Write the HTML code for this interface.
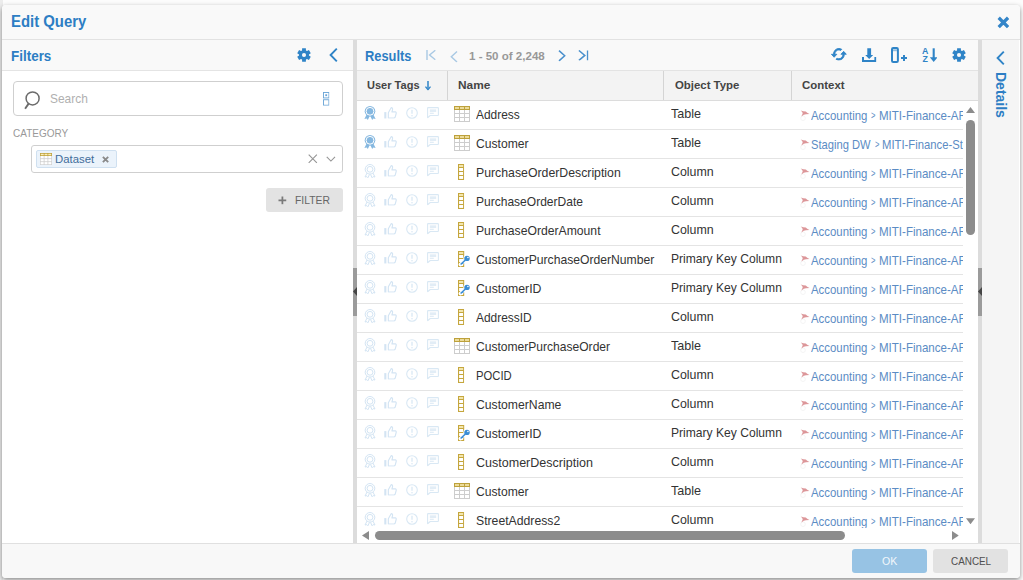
<!DOCTYPE html>
<html lang="en"><head><meta charset="utf-8"><title>Edit Query</title>
<style>

html,body{margin:0;padding:0}
body{width:1023px;height:580px;overflow:hidden;position:relative;background:#fcfcfc;font-family:"Liberation Sans", sans-serif;}
.abs,.t,.i{position:absolute}
.t{white-space:pre;line-height:20px;transform-origin:0 50%;display:block}
.i{overflow:visible;display:block}
#bgstrip{left:0;top:0;width:3px;height:580px;background:#ececec}
#dlg{left:2px;top:5px;width:1018px;height:573px;background:#fff;border-radius:4px;box-shadow:0 2px 5px rgba(0,0,0,.45);overflow:hidden}
#hdr{left:0;top:0;width:1018px;height:34px;background:#f9f9f9;border-bottom:1px solid #e2e2e2}
#fhdr{left:0;top:35px;width:351px;height:30px;background:#f9f9f9;border-bottom:1px solid #e4e4e4}
#rhdr{left:355px;top:35px;width:621px;height:30px;background:#f9f9f9}
#split1{left:351px;top:35px;width:4px;height:503px;background:#dcdcdc}
#split2{left:976px;top:35px;width:4px;height:503px;background:#dcdcdc}
#det{left:980px;top:35px;width:37px;height:503px;background:#f5f5f5}
#ftr{left:0;top:538px;width:1018px;height:35px;background:#f8f8f8;border-top:1px solid #e0e0e0;box-sizing:border-box}
#search{left:11px;top:76px;width:330px;height:35px;border:1px solid #cfcfcf;border-radius:4px;box-sizing:border-box;background:#fff}
#sel{left:29px;top:140px;width:312px;height:28px;border:1px solid #cfcfcf;border-radius:3px;box-sizing:border-box;background:#fff}
#tag{left:34px;top:145px;width:81px;height:18px;border:1px solid #cfe0f0;border-radius:2px;box-sizing:border-box;background:#ebf3fb}
#fbtn{left:264px;top:183px;width:77px;height:24px;border-radius:3px;background:#e3e3e3}
#okb{left:850px;top:544px;width:75px;height:24px;border-radius:3px;background:#97c3e4}
#cab{left:931px;top:544px;width:75px;height:24px;border-radius:3px;background:#e2e2e2}
#ghead{left:355px;top:65px;width:621px;height:31px;background:#f3f3f3;border-top:1px solid #e3e3e3;border-bottom:1px solid #dcdcdc;box-sizing:border-box}
.cd{position:absolute;top:66px;width:1px;height:29px;background:#d4d4d4}
#gbody{left:355px;top:95px;width:606px;height:431px;overflow:hidden;background:#fff}
.rl{position:absolute;left:0;width:606px;height:1px;background:#e4e4e4}
.sb{position:absolute;background:#8c8c8c;border-radius:5px}

</style></head><body>
<div class="abs" id="bgstrip"></div>
<div class="abs" id="dlg">
<div class="abs" id="hdr"></div><div class="abs" id="fhdr"></div><div class="abs" id="rhdr"></div>
<div class="abs" id="split1"></div><div class="abs" id="split2"></div><div class="abs" id="det"></div><div class="abs" id="ftr"></div>
<div class="abs" id="search"></div><div class="abs" id="sel"></div><div class="abs" id="tag"></div>
<div class="abs" id="fbtn"></div><div class="abs" id="okb"></div><div class="abs" id="cab"></div>
<div class="abs" id="ghead"></div>
<div class="cd" style="left:445.0px"></div>
<div class="cd" style="left:661.3px"></div>
<div class="cd" style="left:788.9px"></div>
</div>
<svg width="0" height="0" style="position:absolute;left:0;top:0"><defs>
<symbol id="gear" viewBox="0 0 14 14"><path fill="currentColor" fill-rule="evenodd" d="M5.05 2.39 L5.13 0.25 L8.87 0.25 L8.95 2.39 L10.01 3.01 L11.91 2.01 L13.78 5.24 L11.96 6.38 L11.96 7.62 L13.78 8.76 L11.91 11.99 L10.01 10.99 L8.95 11.61 L8.87 13.75 L5.13 13.75 L5.05 11.61 L3.99 10.99 L2.09 11.99 L0.22 8.76 L2.04 7.62 L2.04 6.38 L0.22 5.24 L2.09 2.01 L3.99 3.01Z M4.95 7a2.05 2.05 0 1 0 4.1 0a2.05 2.05 0 1 0 -4.1 0Z"/></symbol>
<symbol id="chev-l" viewBox="0 0 9 14"><path d="M7.8 0.7 L1.6 7 L7.8 13.3" fill="none" stroke="currentColor" stroke-width="1.9" stroke-linecap="butt" stroke-linejoin="miter"/></symbol>
<symbol id="close" viewBox="0 0 12 12"><path d="M1.6 1.6 L10.4 10.4 M10.4 1.6 L1.6 10.4" fill="none" stroke="currentColor" stroke-width="3.1"/></symbol>
<symbol id="mag" viewBox="0 0 17 19"><circle cx="8.6" cy="7.4" r="6.5" fill="none" stroke="currentColor" stroke-width="1.5"/><path d="M4.6 12.6 L1.1 17.8" stroke="currentColor" stroke-width="1.9" stroke-linecap="butt"/></symbol>
<symbol id="opts" viewBox="0 0 7 15"><rect x="0.5" y="0.5" width="6" height="6" fill="none" stroke="currentColor" stroke-width="1"/><rect x="2.5" y="2.5" width="2" height="2" fill="currentColor"/><rect x="0.5" y="8.5" width="6" height="6" fill="none" stroke="currentColor" stroke-width="1"/></symbol>
<symbol id="x-bold" viewBox="0 0 8 8"><path d="M1 1 L7 7 M7 1 L1 7" stroke="currentColor" stroke-width="2.1" fill="none"/></symbol>
<symbol id="x-thin" viewBox="0 0 11 11"><path d="M0.8 0.8 L10.2 10.2 M10.2 0.8 L0.8 10.2" stroke="currentColor" stroke-width="1.3" fill="none"/></symbol>
<symbol id="chev-d" viewBox="0 0 11 7"><path d="M0.8 1 L5.5 5.7 L10.2 1" stroke="currentColor" stroke-width="1.3" fill="none"/></symbol>
<symbol id="plus" viewBox="0 0 9 9"><path d="M4.5 0.5 V8.5 M0.5 4.5 H8.5" stroke="currentColor" stroke-width="1.8" fill="none"/></symbol>
<symbol id="first" viewBox="0 0 10 10"><path d="M1 0 V10" stroke="currentColor" stroke-width="1.4" fill="none"/><path d="M9.3 0.3 L3.6 5 L9.3 9.7" stroke="currentColor" stroke-width="1.4" fill="none"/></symbol>
<symbol id="last" viewBox="0 0 10.5 10.5"><path d="M9.6 0.5 V10.5" stroke="currentColor" stroke-width="1.5" fill="none"/><path d="M0.9 0.5 L6.8 5.4 L0.9 10.3" stroke="currentColor" stroke-width="1.5" fill="none"/></symbol>
<symbol id="prev" viewBox="0 0 8 11.5"><path d="M7 0.6 L1.3 5.75 L7 10.9" stroke="currentColor" stroke-width="1.4" fill="none"/></symbol>
<symbol id="next" viewBox="0 0 8 11.5"><path d="M1 0.6 L6.7 5.75 L1 10.9" stroke="currentColor" stroke-width="1.5" fill="none"/></symbol>
<symbol id="refresh" viewBox="0.4 3.4 23.2 17.2" preserveAspectRatio="none"><path fill="currentColor" stroke="currentColor" stroke-width="1.2" stroke-linejoin="round" d="M19 8l-4 4h3c0 3.31-2.69 6-6 6-1.01 0-1.97-.25-2.8-.7l-1.46 1.46C8.97 19.54 10.43 20 12 20c4.42 0 8-3.58 8-8h3l-4-4zM6 12c0-3.31 2.69-6 6-6 1.01 0 1.97.25 2.8.7l1.46-1.46C15.03 4.46 13.57 4 12 4c-4.42 0-8 3.58-8 8H1l4 4 4-4H6z"/></symbol>
<symbol id="download" viewBox="0 0 14.4 14"><path d="M5.3 0.2 H9.1 V7 H11.2 L7.2 11 L3.2 7 H5.3Z" fill="currentColor"/><path d="M1 9 V13 H13.4 V9" fill="none" stroke="currentColor" stroke-width="2"/></symbol>
<symbol id="coladd" viewBox="0 0 16 16"><rect x="1" y="1" width="5.9" height="14" rx="1.2" fill="none" stroke="currentColor" stroke-width="2"/><rect x="2" y="2.3" width="3.9" height="1.9" fill="currentColor" opacity=".5"/><path d="M13 7.9 V13.9 M10 10.9 H16" stroke="currentColor" stroke-width="2"/></symbol>
<symbol id="sortaz" viewBox="0 0 15 14"><text x="0" y="6.4" font-family="Liberation Sans, sans-serif" font-size="8.8" font-weight="bold" fill="currentColor">A</text><text x="0.5" y="14" font-family="Liberation Sans, sans-serif" font-size="8.8" font-weight="bold" fill="currentColor">Z</text><path d="M11.7 0.3 V10.4" stroke="currentColor" stroke-width="2.1" fill="none"/><path d="M7.8 9.2 H15.6 L11.7 14Z" fill="currentColor"/></symbol>
<symbol id="sortdown" viewBox="0 0 6 10"><path d="M3 0 V8" stroke="currentColor" stroke-width="1.6" fill="none"/><path d="M0.3 6 L3 9.3 L5.7 6" stroke="currentColor" stroke-width="1.4" fill="none"/></symbol>
<symbol id="tri-u" viewBox="0 0 9 6"><path d="M0 6 L4.5 0 L9 6Z" fill="currentColor"/></symbol>
<symbol id="tri-d" viewBox="0 0 9 6"><path d="M0 0 L4.5 6 L9 0Z" fill="currentColor"/></symbol>
<symbol id="tri-l" viewBox="0 0 7 9" preserveAspectRatio="none"><path d="M7 0 L0 4.5 L7 9Z" fill="currentColor"/></symbol>
<symbol id="tri-r" viewBox="0 0 7 9" preserveAspectRatio="none"><path d="M0 0 L7 4.5 L0 9Z" fill="currentColor"/></symbol>
<symbol id="tbl" viewBox="0 0 16 16"><rect x="0" y="3" width="16" height="13" fill="#fff"/><path d="M0.5 4 V16 M5.5 4 V16 M10.5 4 V16 M15.5 4 V16 M0 7.5 H16 M0 11.5 H16 M0 15.5 H16" stroke="#cdcdcd" stroke-width="1" fill="none"/><rect x="0" y="0" width="16" height="4" fill="#bda13b"/><path d="M1 2 H5 M6 2 H10 M11 2 H15" stroke="#fbeebb" stroke-width="1.7"/></symbol>
<symbol id="col" viewBox="0 0 6.2 16"><rect x="0.55" y="0.5" width="5.1" height="15" fill="#fff" stroke="#c5a63c" stroke-width="1.1"/><rect x="1.1" y="1" width="4" height="2" fill="#f3e6ad"/><path d="M0.55 3.5 H5.65 M0.55 7.5 H5.65 M0.55 11.5 H5.65" stroke="#c5a63c" stroke-width="1"/></symbol>
<symbol id="key" viewBox="0 0 13 16"><rect x="0.55" y="0.5" width="5.1" height="15" fill="#fff" stroke="#c5a63c" stroke-width="1.1"/><rect x="1.1" y="1" width="4" height="2" fill="#f3e6ad"/><path d="M0.55 3.5 H5.65 M0.55 7.5 H5.65 M0.55 11.5 H5.65" stroke="#c5a63c" stroke-width="1"/><path d="M9 7.4 L2.4 13.6" stroke="#fff" stroke-width="3.6" stroke-linecap="round"/><circle cx="9" cy="7.4" r="3.6" fill="#fff"/><circle cx="9" cy="7.4" r="2.7" fill="#3a8dd4"/><circle cx="9.9" cy="6.5" r="0.8" fill="#fff"/><path d="M7.4 9 L2.6 13.5" stroke="#3a8dd4" stroke-width="1.6"/><path d="M4.3 11.6 L5.3 12.7" stroke="#3a8dd4" stroke-width="1.3"/></symbol>
<symbol id="ctx" viewBox="0 0 10 11"><circle cx="3" cy="8.2" r="2.3" fill="none" stroke="#f3f3f3" stroke-width="0.9"/><path d="M0.7 0.5 L3.2 1.3 L5.8 1.6 L7.2 2.7 L9.4 3.9 L6 4.3 L3.8 4.8 L1.3 6.4 L2.7 3.6 L2.2 1.9 Z" fill="#cc6468" opacity=".68"/></symbol>
<symbol id="award-on" viewBox="0 0 12 14"><path d="M3 7.8 L0.4 12.9 L2.7 12.5 L3.8 14 L6 9.6 L8.2 14 L9.3 12.5 L11.6 12.9 L9 7.8Z" fill="currentColor"/><circle cx="6" cy="5.3" r="5.3" fill="currentColor"/><circle cx="6" cy="5.3" r="3.9" fill="none" stroke="#fff" stroke-width="1"/></symbol>
<symbol id="award" viewBox="0 0 12 14"><path d="M3.1 9 L1 13 L2.9 12.6 L3.9 13.8 L5.5 10.4 M8.9 9 L11 13 L9.1 12.6 L8.1 13.8 L6.5 10.4" fill="none" stroke="currentColor" stroke-width="1"/><circle cx="6" cy="5.3" r="4.8" fill="none" stroke="currentColor" stroke-width="1"/><circle cx="6" cy="5.3" r="2.9" fill="none" stroke="currentColor" stroke-width="1"/></symbol>
<symbol id="thumb" viewBox="0 0 14 12.5"><rect x="0.3" y="5.4" width="2.2" height="6.9" fill="currentColor"/><path d="M4.6 11.7 V6.2 L7.6 0.7 Q9.6 0.8 9 3.2 L8.4 5.2 H12.2 Q13.2 5.4 13 6.6 L11.8 10.9 Q11.5 11.7 10.6 11.7Z" fill="none" stroke="currentColor" stroke-width="1.2" stroke-linejoin="round"/></symbol>
<symbol id="alert" viewBox="0 0 12 12"><circle cx="6" cy="6" r="5.3" fill="none" stroke="currentColor" stroke-width="1.1"/><path d="M6 2.8 V6.8" stroke="currentColor" stroke-width="1.3"/><circle cx="6" cy="8.8" r="0.8" fill="currentColor"/></symbol>
<symbol id="comment" viewBox="0 0 12 11.4"><path d="M1.2 0.6 H10.8 Q11.4 0.6 11.4 1.2 V7.9 Q11.4 8.5 10.8 8.5 H3.2 L0.6 10.8 V1.2 Q0.6 0.6 1.2 0.6Z" fill="none" stroke="currentColor" stroke-width="1.1" stroke-linejoin="round"/><path d="M2.8 3 H9.2 M2.8 4.3 H9.2 M2.8 6.2 H6.8" stroke="currentColor" stroke-width="1.1"/></symbol>
</defs></svg>
<div class="abs" id="gb2" style="left:357px;top:100px;width:606px;height:428px;overflow:hidden">
<div class="rl" style="top:29px"></div>
<div class="rl" style="top:58px"></div>
<div class="rl" style="top:87px"></div>
<div class="rl" style="top:116px"></div>
<div class="rl" style="top:145px"></div>
<div class="rl" style="top:174px"></div>
<div class="rl" style="top:203px"></div>
<div class="rl" style="top:232px"></div>
<div class="rl" style="top:261px"></div>
<div class="rl" style="top:290px"></div>
<div class="rl" style="top:319px"></div>
<div class="rl" style="top:348px"></div>
<div class="rl" style="top:377px"></div>
<div class="rl" style="top:406px"></div>
<div class="rl" style="top:435px"></div>
<span class="t" style="left:119.23px;top:4.60px;font-size:12.7px;color:#333333;transform:scaleX(0.9389);">Address</span>
<span class="t" style="left:313.97px;top:3.60px;font-size:12.7px;color:#333333;transform:scaleX(0.9917);">Table</span>
<span class="t" style="left:454.38px;top:5.80px;font-size:12.7px;color:#5b8cc4;transform:scaleX(0.8977);">Accounting</span>
<span class="t" style="left:514.23px;top:5.46px;font-size:10.5px;color:#5b8cc4;transform:scaleX(0.7241);">&gt;</span>
<span class="t" style="left:521.85px;top:5.80px;font-size:12.7px;color:#5b8cc4;transform:scaleX(0.9088);">MITI-Finance-AR</span>
<span class="t" style="left:118.63px;top:33.60px;font-size:12.7px;color:#333333;transform:scaleX(0.9558);">Customer</span>
<span class="t" style="left:313.97px;top:32.60px;font-size:12.7px;color:#333333;transform:scaleX(0.9917);">Table</span>
<span class="t" style="left:453.89px;top:34.80px;font-size:12.7px;color:#5b8cc4;transform:scaleX(0.8795);">Staging DW</span>
<span class="t" style="left:517.63px;top:34.46px;font-size:10.5px;color:#5b8cc4;transform:scaleX(0.7241);">&gt;</span>
<span class="t" style="left:525.27px;top:34.80px;font-size:12.7px;color:#5b8cc4;transform:scaleX(0.8885);">MITI-Finance-St</span>
<span class="t" style="left:119.04px;top:62.60px;font-size:12.7px;color:#333333;transform:scaleX(0.9683);">PurchaseOrderDescription</span>
<span class="t" style="left:313.62px;top:61.60px;font-size:12.7px;color:#333333;transform:scaleX(0.9775);">Column</span>
<span class="t" style="left:454.38px;top:63.80px;font-size:12.7px;color:#5b8cc4;transform:scaleX(0.8977);">Accounting</span>
<span class="t" style="left:514.23px;top:63.46px;font-size:10.5px;color:#5b8cc4;transform:scaleX(0.7241);">&gt;</span>
<span class="t" style="left:521.85px;top:63.80px;font-size:12.7px;color:#5b8cc4;transform:scaleX(0.9088);">MITI-Finance-AR</span>
<span class="t" style="left:119.06px;top:91.60px;font-size:12.7px;color:#333333;transform:scaleX(0.9480);">PurchaseOrderDate</span>
<span class="t" style="left:313.62px;top:90.60px;font-size:12.7px;color:#333333;transform:scaleX(0.9775);">Column</span>
<span class="t" style="left:454.38px;top:92.80px;font-size:12.7px;color:#5b8cc4;transform:scaleX(0.8977);">Accounting</span>
<span class="t" style="left:514.23px;top:92.46px;font-size:10.5px;color:#5b8cc4;transform:scaleX(0.7241);">&gt;</span>
<span class="t" style="left:521.85px;top:92.80px;font-size:12.7px;color:#5b8cc4;transform:scaleX(0.9088);">MITI-Finance-AR</span>
<span class="t" style="left:119.05px;top:120.60px;font-size:12.7px;color:#333333;transform:scaleX(0.9597);">PurchaseOrderAmount</span>
<span class="t" style="left:313.62px;top:119.60px;font-size:12.7px;color:#333333;transform:scaleX(0.9775);">Column</span>
<span class="t" style="left:454.38px;top:121.80px;font-size:12.7px;color:#5b8cc4;transform:scaleX(0.8977);">Accounting</span>
<span class="t" style="left:514.23px;top:121.46px;font-size:10.5px;color:#5b8cc4;transform:scaleX(0.7241);">&gt;</span>
<span class="t" style="left:521.85px;top:121.80px;font-size:12.7px;color:#5b8cc4;transform:scaleX(0.9088);">MITI-Finance-AR</span>
<span class="t" style="left:118.63px;top:149.60px;font-size:12.7px;color:#333333;transform:scaleX(0.9579);">CustomerPurchaseOrderNumber</span>
<span class="t" style="left:314.16px;top:148.60px;font-size:12.7px;color:#333333;transform:scaleX(0.9530);">Primary Key Column</span>
<span class="t" style="left:454.38px;top:150.80px;font-size:12.7px;color:#5b8cc4;transform:scaleX(0.8977);">Accounting</span>
<span class="t" style="left:514.23px;top:150.46px;font-size:10.5px;color:#5b8cc4;transform:scaleX(0.7241);">&gt;</span>
<span class="t" style="left:521.85px;top:150.80px;font-size:12.7px;color:#5b8cc4;transform:scaleX(0.9088);">MITI-Finance-AR</span>
<span class="t" style="left:118.63px;top:178.60px;font-size:12.7px;color:#333333;transform:scaleX(0.9671);">CustomerID</span>
<span class="t" style="left:314.16px;top:177.60px;font-size:12.7px;color:#333333;transform:scaleX(0.9530);">Primary Key Column</span>
<span class="t" style="left:454.38px;top:179.80px;font-size:12.7px;color:#5b8cc4;transform:scaleX(0.8977);">Accounting</span>
<span class="t" style="left:514.23px;top:179.46px;font-size:10.5px;color:#5b8cc4;transform:scaleX(0.7241);">&gt;</span>
<span class="t" style="left:521.85px;top:179.80px;font-size:12.7px;color:#5b8cc4;transform:scaleX(0.9088);">MITI-Finance-AR</span>
<span class="t" style="left:119.23px;top:207.60px;font-size:12.7px;color:#333333;transform:scaleX(0.9385);">AddressID</span>
<span class="t" style="left:313.62px;top:206.60px;font-size:12.7px;color:#333333;transform:scaleX(0.9775);">Column</span>
<span class="t" style="left:454.38px;top:208.80px;font-size:12.7px;color:#5b8cc4;transform:scaleX(0.8977);">Accounting</span>
<span class="t" style="left:514.23px;top:208.46px;font-size:10.5px;color:#5b8cc4;transform:scaleX(0.7241);">&gt;</span>
<span class="t" style="left:521.85px;top:208.80px;font-size:12.7px;color:#5b8cc4;transform:scaleX(0.9088);">MITI-Finance-AR</span>
<span class="t" style="left:118.64px;top:236.60px;font-size:12.7px;color:#333333;transform:scaleX(0.9506);">CustomerPurchaseOrder</span>
<span class="t" style="left:313.97px;top:235.60px;font-size:12.7px;color:#333333;transform:scaleX(0.9917);">Table</span>
<span class="t" style="left:454.38px;top:237.80px;font-size:12.7px;color:#5b8cc4;transform:scaleX(0.8977);">Accounting</span>
<span class="t" style="left:514.23px;top:237.46px;font-size:10.5px;color:#5b8cc4;transform:scaleX(0.7241);">&gt;</span>
<span class="t" style="left:521.85px;top:237.80px;font-size:12.7px;color:#5b8cc4;transform:scaleX(0.9088);">MITI-Finance-AR</span>
<span class="t" style="left:119.13px;top:265.60px;font-size:12.7px;color:#333333;transform:scaleX(0.8874);">POCID</span>
<span class="t" style="left:313.62px;top:264.60px;font-size:12.7px;color:#333333;transform:scaleX(0.9775);">Column</span>
<span class="t" style="left:454.38px;top:266.80px;font-size:12.7px;color:#5b8cc4;transform:scaleX(0.8977);">Accounting</span>
<span class="t" style="left:514.23px;top:266.46px;font-size:10.5px;color:#5b8cc4;transform:scaleX(0.7241);">&gt;</span>
<span class="t" style="left:521.85px;top:266.80px;font-size:12.7px;color:#5b8cc4;transform:scaleX(0.9088);">MITI-Finance-AR</span>
<span class="t" style="left:118.63px;top:294.60px;font-size:12.7px;color:#333333;transform:scaleX(0.9614);">CustomerName</span>
<span class="t" style="left:313.62px;top:293.60px;font-size:12.7px;color:#333333;transform:scaleX(0.9775);">Column</span>
<span class="t" style="left:454.38px;top:295.80px;font-size:12.7px;color:#5b8cc4;transform:scaleX(0.8977);">Accounting</span>
<span class="t" style="left:514.23px;top:295.46px;font-size:10.5px;color:#5b8cc4;transform:scaleX(0.7241);">&gt;</span>
<span class="t" style="left:521.85px;top:295.80px;font-size:12.7px;color:#5b8cc4;transform:scaleX(0.9088);">MITI-Finance-AR</span>
<span class="t" style="left:118.63px;top:323.60px;font-size:12.7px;color:#333333;transform:scaleX(0.9671);">CustomerID</span>
<span class="t" style="left:314.16px;top:322.60px;font-size:12.7px;color:#333333;transform:scaleX(0.9530);">Primary Key Column</span>
<span class="t" style="left:454.38px;top:324.80px;font-size:12.7px;color:#5b8cc4;transform:scaleX(0.8977);">Accounting</span>
<span class="t" style="left:514.23px;top:324.46px;font-size:10.5px;color:#5b8cc4;transform:scaleX(0.7241);">&gt;</span>
<span class="t" style="left:521.85px;top:324.80px;font-size:12.7px;color:#5b8cc4;transform:scaleX(0.9088);">MITI-Finance-AR</span>
<span class="t" style="left:118.61px;top:352.60px;font-size:12.7px;color:#333333;transform:scaleX(0.9872);">CustomerDescription</span>
<span class="t" style="left:313.62px;top:351.60px;font-size:12.7px;color:#333333;transform:scaleX(0.9775);">Column</span>
<span class="t" style="left:454.38px;top:353.80px;font-size:12.7px;color:#5b8cc4;transform:scaleX(0.8977);">Accounting</span>
<span class="t" style="left:514.23px;top:353.46px;font-size:10.5px;color:#5b8cc4;transform:scaleX(0.7241);">&gt;</span>
<span class="t" style="left:521.85px;top:353.80px;font-size:12.7px;color:#5b8cc4;transform:scaleX(0.9088);">MITI-Finance-AR</span>
<span class="t" style="left:118.63px;top:381.60px;font-size:12.7px;color:#333333;transform:scaleX(0.9558);">Customer</span>
<span class="t" style="left:313.97px;top:380.60px;font-size:12.7px;color:#333333;transform:scaleX(0.9917);">Table</span>
<span class="t" style="left:454.38px;top:382.80px;font-size:12.7px;color:#5b8cc4;transform:scaleX(0.8977);">Accounting</span>
<span class="t" style="left:514.23px;top:382.46px;font-size:10.5px;color:#5b8cc4;transform:scaleX(0.7241);">&gt;</span>
<span class="t" style="left:521.85px;top:382.80px;font-size:12.7px;color:#5b8cc4;transform:scaleX(0.9088);">MITI-Finance-AR</span>
<span class="t" style="left:118.69px;top:410.60px;font-size:12.7px;color:#333333;transform:scaleX(0.9625);">StreetAddress2</span>
<span class="t" style="left:313.62px;top:409.60px;font-size:12.7px;color:#333333;transform:scaleX(0.9775);">Column</span>
<span class="t" style="left:454.38px;top:411.80px;font-size:12.7px;color:#5b8cc4;transform:scaleX(0.8977);">Accounting</span>
<span class="t" style="left:514.23px;top:411.46px;font-size:10.5px;color:#5b8cc4;transform:scaleX(0.7241);">&gt;</span>
<span class="t" style="left:521.85px;top:411.80px;font-size:12.7px;color:#5b8cc4;transform:scaleX(0.9088);">MITI-Finance-AR</span>
<svg class="i" style="left:7px;top:6px;width:12px;height:14px;color:#86b8e0;"><use href="#award-on"/></svg>
<svg class="i" style="left:27.19999999999999px;top:6.9px;width:13.2px;height:11.8px;color:#d3e4f3;"><use href="#thumb"/></svg>
<svg class="i" style="left:49px;top:7px;width:12px;height:12px;color:#d9e8f4;"><use href="#alert"/></svg>
<svg class="i" style="left:70px;top:7px;width:12px;height:11.4px;color:#d9e8f4;"><use href="#comment"/></svg>
<svg class="i" style="left:97px;top:6px;width:16px;height:16px;"><use href="#tbl"/></svg>
<svg class="i" style="left:442.5px;top:10.4px;width:10px;height:11px;"><use href="#ctx"/></svg>
<svg class="i" style="left:7px;top:35px;width:12px;height:14px;color:#86b8e0;"><use href="#award-on"/></svg>
<svg class="i" style="left:27.19999999999999px;top:35.9px;width:13.2px;height:11.8px;color:#d3e4f3;"><use href="#thumb"/></svg>
<svg class="i" style="left:49px;top:36px;width:12px;height:12px;color:#d9e8f4;"><use href="#alert"/></svg>
<svg class="i" style="left:70px;top:36px;width:12px;height:11.4px;color:#d9e8f4;"><use href="#comment"/></svg>
<svg class="i" style="left:97px;top:35px;width:16px;height:16px;"><use href="#tbl"/></svg>
<svg class="i" style="left:442.5px;top:39.4px;width:10px;height:11px;"><use href="#ctx"/></svg>
<svg class="i" style="left:7px;top:64px;width:12px;height:14px;color:#d3e4f3;"><use href="#award"/></svg>
<svg class="i" style="left:27.19999999999999px;top:64.9px;width:13.2px;height:11.8px;color:#d3e4f3;"><use href="#thumb"/></svg>
<svg class="i" style="left:49px;top:65px;width:12px;height:12px;color:#d9e8f4;"><use href="#alert"/></svg>
<svg class="i" style="left:70px;top:65px;width:12px;height:11.4px;color:#d9e8f4;"><use href="#comment"/></svg>
<svg class="i" style="left:101px;top:64px;width:6.2px;height:16px;"><use href="#col"/></svg>
<svg class="i" style="left:442.5px;top:68.4px;width:10px;height:11px;"><use href="#ctx"/></svg>
<svg class="i" style="left:7px;top:93px;width:12px;height:14px;color:#d3e4f3;"><use href="#award"/></svg>
<svg class="i" style="left:27.19999999999999px;top:93.9px;width:13.2px;height:11.8px;color:#d3e4f3;"><use href="#thumb"/></svg>
<svg class="i" style="left:49px;top:94px;width:12px;height:12px;color:#d9e8f4;"><use href="#alert"/></svg>
<svg class="i" style="left:70px;top:94px;width:12px;height:11.4px;color:#d9e8f4;"><use href="#comment"/></svg>
<svg class="i" style="left:101px;top:93px;width:6.2px;height:16px;"><use href="#col"/></svg>
<svg class="i" style="left:442.5px;top:97.4px;width:10px;height:11px;"><use href="#ctx"/></svg>
<svg class="i" style="left:7px;top:122px;width:12px;height:14px;color:#d3e4f3;"><use href="#award"/></svg>
<svg class="i" style="left:27.19999999999999px;top:122.9px;width:13.2px;height:11.8px;color:#d3e4f3;"><use href="#thumb"/></svg>
<svg class="i" style="left:49px;top:123px;width:12px;height:12px;color:#d9e8f4;"><use href="#alert"/></svg>
<svg class="i" style="left:70px;top:123px;width:12px;height:11.4px;color:#d9e8f4;"><use href="#comment"/></svg>
<svg class="i" style="left:101px;top:122px;width:6.2px;height:16px;"><use href="#col"/></svg>
<svg class="i" style="left:442.5px;top:126.4px;width:10px;height:11px;"><use href="#ctx"/></svg>
<svg class="i" style="left:7px;top:151px;width:12px;height:14px;color:#d3e4f3;"><use href="#award"/></svg>
<svg class="i" style="left:27.19999999999999px;top:151.9px;width:13.2px;height:11.8px;color:#d3e4f3;"><use href="#thumb"/></svg>
<svg class="i" style="left:49px;top:152px;width:12px;height:12px;color:#d9e8f4;"><use href="#alert"/></svg>
<svg class="i" style="left:70px;top:152px;width:12px;height:11.4px;color:#d9e8f4;"><use href="#comment"/></svg>
<svg class="i" style="left:101px;top:151px;width:13px;height:16px;"><use href="#key"/></svg>
<svg class="i" style="left:442.5px;top:155.4px;width:10px;height:11px;"><use href="#ctx"/></svg>
<svg class="i" style="left:7px;top:180px;width:12px;height:14px;color:#d3e4f3;"><use href="#award"/></svg>
<svg class="i" style="left:27.19999999999999px;top:180.9px;width:13.2px;height:11.8px;color:#d3e4f3;"><use href="#thumb"/></svg>
<svg class="i" style="left:49px;top:181px;width:12px;height:12px;color:#d9e8f4;"><use href="#alert"/></svg>
<svg class="i" style="left:70px;top:181px;width:12px;height:11.4px;color:#d9e8f4;"><use href="#comment"/></svg>
<svg class="i" style="left:101px;top:180px;width:13px;height:16px;"><use href="#key"/></svg>
<svg class="i" style="left:442.5px;top:184.4px;width:10px;height:11px;"><use href="#ctx"/></svg>
<svg class="i" style="left:7px;top:209px;width:12px;height:14px;color:#d3e4f3;"><use href="#award"/></svg>
<svg class="i" style="left:27.19999999999999px;top:209.9px;width:13.2px;height:11.8px;color:#d3e4f3;"><use href="#thumb"/></svg>
<svg class="i" style="left:49px;top:210px;width:12px;height:12px;color:#d9e8f4;"><use href="#alert"/></svg>
<svg class="i" style="left:70px;top:210px;width:12px;height:11.4px;color:#d9e8f4;"><use href="#comment"/></svg>
<svg class="i" style="left:101px;top:209px;width:6.2px;height:16px;"><use href="#col"/></svg>
<svg class="i" style="left:442.5px;top:213.4px;width:10px;height:11px;"><use href="#ctx"/></svg>
<svg class="i" style="left:7px;top:238px;width:12px;height:14px;color:#d3e4f3;"><use href="#award"/></svg>
<svg class="i" style="left:27.19999999999999px;top:238.9px;width:13.2px;height:11.8px;color:#d3e4f3;"><use href="#thumb"/></svg>
<svg class="i" style="left:49px;top:239px;width:12px;height:12px;color:#d9e8f4;"><use href="#alert"/></svg>
<svg class="i" style="left:70px;top:239px;width:12px;height:11.4px;color:#d9e8f4;"><use href="#comment"/></svg>
<svg class="i" style="left:97px;top:238px;width:16px;height:16px;"><use href="#tbl"/></svg>
<svg class="i" style="left:442.5px;top:242.4px;width:10px;height:11px;"><use href="#ctx"/></svg>
<svg class="i" style="left:7px;top:267px;width:12px;height:14px;color:#d3e4f3;"><use href="#award"/></svg>
<svg class="i" style="left:27.19999999999999px;top:267.9px;width:13.2px;height:11.8px;color:#d3e4f3;"><use href="#thumb"/></svg>
<svg class="i" style="left:49px;top:268px;width:12px;height:12px;color:#d9e8f4;"><use href="#alert"/></svg>
<svg class="i" style="left:70px;top:268px;width:12px;height:11.4px;color:#d9e8f4;"><use href="#comment"/></svg>
<svg class="i" style="left:101px;top:267px;width:6.2px;height:16px;"><use href="#col"/></svg>
<svg class="i" style="left:442.5px;top:271.4px;width:10px;height:11px;"><use href="#ctx"/></svg>
<svg class="i" style="left:7px;top:296px;width:12px;height:14px;color:#d3e4f3;"><use href="#award"/></svg>
<svg class="i" style="left:27.19999999999999px;top:296.9px;width:13.2px;height:11.8px;color:#d3e4f3;"><use href="#thumb"/></svg>
<svg class="i" style="left:49px;top:297px;width:12px;height:12px;color:#d9e8f4;"><use href="#alert"/></svg>
<svg class="i" style="left:70px;top:297px;width:12px;height:11.4px;color:#d9e8f4;"><use href="#comment"/></svg>
<svg class="i" style="left:101px;top:296px;width:6.2px;height:16px;"><use href="#col"/></svg>
<svg class="i" style="left:442.5px;top:300.4px;width:10px;height:11px;"><use href="#ctx"/></svg>
<svg class="i" style="left:7px;top:325px;width:12px;height:14px;color:#d3e4f3;"><use href="#award"/></svg>
<svg class="i" style="left:27.19999999999999px;top:325.9px;width:13.2px;height:11.8px;color:#d3e4f3;"><use href="#thumb"/></svg>
<svg class="i" style="left:49px;top:326px;width:12px;height:12px;color:#d9e8f4;"><use href="#alert"/></svg>
<svg class="i" style="left:70px;top:326px;width:12px;height:11.4px;color:#d9e8f4;"><use href="#comment"/></svg>
<svg class="i" style="left:101px;top:325px;width:13px;height:16px;"><use href="#key"/></svg>
<svg class="i" style="left:442.5px;top:329.4px;width:10px;height:11px;"><use href="#ctx"/></svg>
<svg class="i" style="left:7px;top:354px;width:12px;height:14px;color:#d3e4f3;"><use href="#award"/></svg>
<svg class="i" style="left:27.19999999999999px;top:354.9px;width:13.2px;height:11.8px;color:#d3e4f3;"><use href="#thumb"/></svg>
<svg class="i" style="left:49px;top:355px;width:12px;height:12px;color:#d9e8f4;"><use href="#alert"/></svg>
<svg class="i" style="left:70px;top:355px;width:12px;height:11.4px;color:#d9e8f4;"><use href="#comment"/></svg>
<svg class="i" style="left:101px;top:354px;width:6.2px;height:16px;"><use href="#col"/></svg>
<svg class="i" style="left:442.5px;top:358.4px;width:10px;height:11px;"><use href="#ctx"/></svg>
<svg class="i" style="left:7px;top:383px;width:12px;height:14px;color:#d3e4f3;"><use href="#award"/></svg>
<svg class="i" style="left:27.19999999999999px;top:383.9px;width:13.2px;height:11.8px;color:#d3e4f3;"><use href="#thumb"/></svg>
<svg class="i" style="left:49px;top:384px;width:12px;height:12px;color:#d9e8f4;"><use href="#alert"/></svg>
<svg class="i" style="left:70px;top:384px;width:12px;height:11.4px;color:#d9e8f4;"><use href="#comment"/></svg>
<svg class="i" style="left:97px;top:383px;width:16px;height:16px;"><use href="#tbl"/></svg>
<svg class="i" style="left:442.5px;top:387.4px;width:10px;height:11px;"><use href="#ctx"/></svg>
<svg class="i" style="left:7px;top:412px;width:12px;height:14px;color:#d3e4f3;"><use href="#award"/></svg>
<svg class="i" style="left:27.19999999999999px;top:412.9px;width:13.2px;height:11.8px;color:#d3e4f3;"><use href="#thumb"/></svg>
<svg class="i" style="left:49px;top:413px;width:12px;height:12px;color:#d9e8f4;"><use href="#alert"/></svg>
<svg class="i" style="left:70px;top:413px;width:12px;height:11.4px;color:#d9e8f4;"><use href="#comment"/></svg>
<svg class="i" style="left:101px;top:412px;width:6.2px;height:16px;"><use href="#col"/></svg>
<svg class="i" style="left:442.5px;top:416.4px;width:10px;height:11px;"><use href="#ctx"/></svg>
</div>
<span class="t" style="left:11.40px;top:11.99px;font-size:15.6px;color:#2d7ec4;font-weight:bold;transform:scaleX(0.9546);">Edit Query</span>
<span class="t" style="left:10.60px;top:45.74px;font-size:14.6px;color:#2d7ec4;font-weight:bold;transform:scaleX(0.9213);">Filters</span>
<span class="t" style="left:364.64px;top:45.51px;font-size:14.4px;color:#2d7ec4;font-weight:bold;transform:scaleX(0.8923);">Results</span>
<span class="t" style="left:468.57px;top:45.92px;font-size:10.9px;color:#989898;font-weight:bold;transform:scaleX(1.0608);">1 - 50 of 2,248</span>
<span class="t" style="left:49.56px;top:88.60px;font-size:12.7px;color:#b0b0b0;transform:scaleX(0.9407);">Search</span>
<span class="t" style="left:12.99px;top:122.86px;font-size:10.8px;color:#999999;transform:scaleX(0.9267);">CATEGORY</span>
<span class="t" style="left:54.97px;top:148.61px;font-size:11.8px;color:#3f6c9a;transform:scaleX(0.9621);">Dataset</span>
<span class="t" style="left:294.95px;top:190.02px;font-size:10.9px;color:#666666;transform:scaleX(0.9513);">FILTER</span>
<span class="t" style="left:881.50px;top:550.82px;font-size:11.2px;color:#f2f7fb;transform:scaleX(0.9474);">OK</span>
<span class="t" style="left:950.70px;top:550.82px;font-size:11.2px;color:#505050;transform:scaleX(0.8841);">CANCEL</span>
<span class="t" style="left:366.64px;top:75.31px;font-size:11.8px;color:#444444;font-weight:bold;transform:scaleX(0.9349);">User Tags</span>
<span class="t" style="left:457.70px;top:75.31px;font-size:11.8px;color:#444444;font-weight:bold;transform:scaleX(1.0081);">Name</span>
<span class="t" style="left:675.03px;top:75.31px;font-size:11.8px;color:#444444;font-weight:bold;transform:scaleX(0.9655);">Object Type</span>
<span class="t" style="left:802.13px;top:75.31px;font-size:11.8px;color:#444444;font-weight:bold;transform:scaleX(0.9701);">Context</span>
<svg class="i" style="left:297px;top:47.9px;width:14px;height:14px;color:#2f84c7;"><use href="#gear"/></svg>
<svg class="i" style="left:329.3px;top:47.9px;width:9px;height:14px;color:#2f84c7;"><use href="#chev-l"/></svg>
<svg class="i" style="left:952.3px;top:47.9px;width:14px;height:14px;color:#2f84c7;"><use href="#gear"/></svg>
<svg class="i" style="left:996px;top:50.5px;width:9px;height:14px;color:#2f84c7;"><use href="#chev-l"/></svg>
<svg class="i" style="left:997.0px;top:15.9px;width:12.8px;height:12.8px;color:#3485c8;"><use href="#close"/></svg>
<svg class="i" style="left:23.8px;top:90.6px;width:17px;height:19px;color:#6b6b6b;"><use href="#mag"/></svg>
<svg class="i" style="left:323px;top:92px;width:6.4px;height:13.7px;color:#69a4d6;"><use href="#opts"/></svg>
<svg class="i" style="left:40px;top:152.7px;width:12px;height:12px;"><use href="#tbl"/></svg>
<svg class="i" style="left:101.5px;top:155.5px;width:7.1px;height:7.1px;color:#8a8a8a;"><use href="#x-bold"/></svg>
<svg class="i" style="left:308.2px;top:154.2px;width:9.6px;height:9.6px;color:#969696;"><use href="#x-thin"/></svg>
<svg class="i" style="left:326.2px;top:156px;width:9.8px;height:6.2px;color:#969696;"><use href="#chev-d"/></svg>
<svg class="i" style="left:277.6px;top:195.7px;width:8.8px;height:8.8px;color:#7a7a7a;"><use href="#plus"/></svg>
<svg class="i" style="left:426px;top:49.7px;width:10px;height:10px;color:#a9c9e4;"><use href="#first"/></svg>
<svg class="i" style="left:449.5px;top:50.5px;width:8px;height:11.5px;color:#a9c9e4;"><use href="#prev"/></svg>
<svg class="i" style="left:557.5px;top:50px;width:8px;height:11.5px;color:#4a90cd;"><use href="#next"/></svg>
<svg class="i" style="left:578px;top:49.5px;width:10.5px;height:10.5px;color:#4a90cd;"><use href="#last"/></svg>
<svg class="i" style="left:831px;top:48.2px;width:15.8px;height:12.6px;color:#2f84c7;"><use href="#refresh"/></svg>
<svg class="i" style="left:861.9px;top:48px;width:14.4px;height:14px;color:#2f84c7;"><use href="#download"/></svg>
<svg class="i" style="left:891px;top:47px;width:16px;height:16px;color:#2f84c7;"><use href="#coladd"/></svg>
<svg class="i" style="left:922.3px;top:48px;width:15px;height:14px;color:#2f84c7;"><use href="#sortaz"/></svg>
<svg class="i" style="left:424.8px;top:80.8px;width:6px;height:9.4px;color:#2f84c7;"><use href="#sortdown"/></svg>
<span class="t" style="left:1001.0px;top:71.6px;font-size:14px;font-weight:bold;color:#2d7ec4;line-height:14px;transform-origin:0 0;transform:rotate(90deg) translate(0,-50%) scaleX(1.0)">Details</span>
<div class="sb" style="left:966px;top:119.5px;width:9px;height:115px"></div>
<div class="sb" style="left:374.5px;top:531px;width:470px;height:9px"></div>
<svg class="i" style="left:966px;top:106.5px;width:9px;height:6px;color:#8c8c8c;"><use href="#tri-u"/></svg>
<svg class="i" style="left:966px;top:517.5px;width:9px;height:6.3px;color:#8c8c8c;"><use href="#tri-d"/></svg>
<svg class="i" style="left:361.5px;top:531px;width:7px;height:9px;color:#8c8c8c;"><use href="#tri-l"/></svg>
<svg class="i" style="left:952px;top:531px;width:6.8px;height:9px;color:#8c8c8c;"><use href="#tri-r"/></svg>
<div class="abs" style="left:353px;top:268px;width:4px;height:48px;background:#9b9b9b"></div>
<div class="abs" style="left:978px;top:268px;width:4px;height:48px;background:#9b9b9b"></div>
<svg class="i" style="left:353px;top:287px;width:4px;height:9px;color:#454545;"><use href="#tri-l"/></svg>
<svg class="i" style="left:978px;top:287px;width:4px;height:9px;color:#454545;"><use href="#tri-l"/></svg>
</body></html>
